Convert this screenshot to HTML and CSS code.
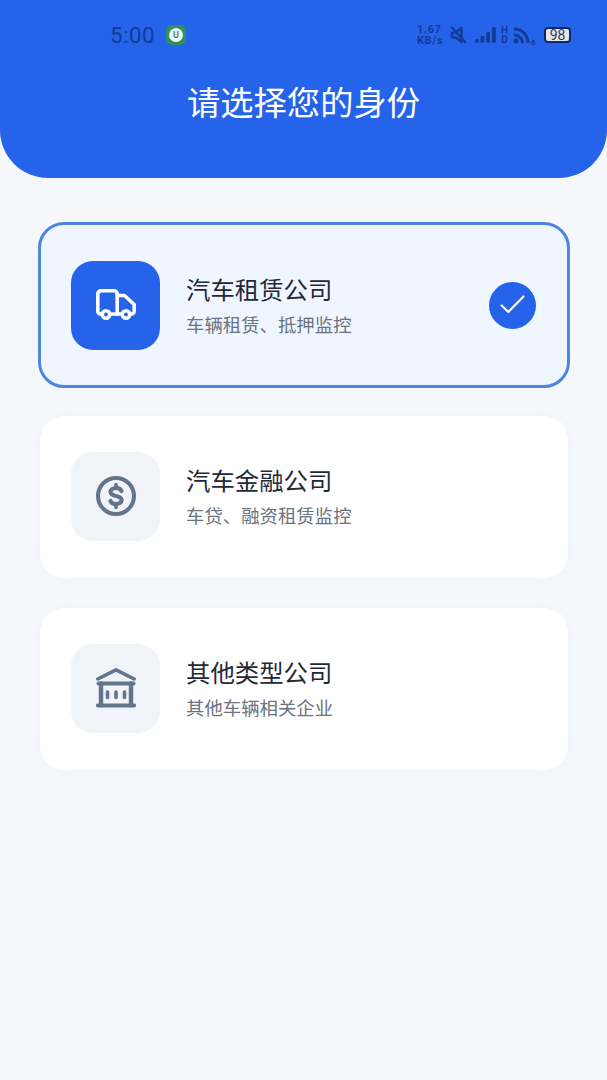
FILE: index.html
```html
<!DOCTYPE html>
<html lang="zh-CN">
<head>
<meta charset="utf-8">
<title>请选择您的身份</title>
<link rel="stylesheet" href="styles.css">
</head>
<body>
<header class="hero">
  <div class="status">
    <div class="status-left">
      <span class="clock">5:00</span>
      <span class="app-badge"><span class="app-dot">U</span></span>
    </div>
    <div class="status-right">
      <span class="speed"><span>1.67</span><span>KB/s</span></span>
      <svg class="st-mute" viewBox="0 0 18 18" width="18" height="18"><path d="M2 6.5h3.5L11.5 2v14l-6-4.500H2z" fill="none" stroke="#123b96" stroke-width="2.2" stroke-linejoin="round"/><path d="M1.5 1L16 17" stroke="#123b96" stroke-width="2.2"/></svg>
      <svg class="st-signal" viewBox="0 0 22 16" width="22" height="16"><g fill="#123b96"><rect x="0" y="12" width="3.8" height="3.8" rx="1.4"/><rect x="5.6" y="9" width="3.8" height="6.8" rx="1"/><rect x="11.2" y="5" width="3.8" height="10.8" rx="1"/><rect x="17" y="0" width="3.8" height="15.8" rx="1"/></g></svg>
      <span class="hd"><span>H</span><span>D</span></span>
      <svg class="st-wifi" viewBox="0 0 18 18" width="18" height="18"><g fill="none" stroke="#123b96" stroke-width="3"><path d="M1 3c8 0 14 6 14 14"/><path d="M1 9c5 0 8.5 3.500 8.5 8"/></g><circle cx="3" cy="15" r="2.500" fill="#123b96"/></svg>
      <span class="wifi-num">6</span>
      <span class="battery">98</span>
    </div>
  </div>
  <h1 class="title">请选择您的身份</h1>
</header>

<main class="list">
  <section class="card card-on">
    <div class="tile tile-on">
      <svg viewBox="0 0 40 32" width="40" height="32" fill="none" stroke="#fff" stroke-width="3.6" stroke-linejoin="round" stroke-linecap="round">
        <path d="M6 25H4.500A2.800 2.800 0 0 1 1.800 22.200V5A3.200 3.200 0 0 1 5 1.800H18A3.200 3.200 0 0 1 21.200 5V25"/>
        <path d="M21.200 6.500H28.500L38.200 15.500V22.200A2.800 2.800 0 0 1 35.500 25H34.500"/>
        <path d="M15 25H25"/>
        <circle cx="10" cy="25.500" r="3.700"/>
        <circle cx="30" cy="25.500" r="3.700"/>
      </svg>
    </div>
    <div class="copy">
      <h2 class="name">汽车租赁公司</h2>
      <p class="desc">车辆租赁、抵押监控</p>
    </div>
    <div class="check">
      <svg viewBox="0 0 26 22" width="26" height="22" fill="none" stroke="#fff" stroke-width="2.2" stroke-linecap="round" stroke-linejoin="round"><path d="M1.700 11.500L8.300 18L23.500 2.500"/></svg>
    </div>
  </section>

  <section class="card">
    <div class="tile">
      <svg viewBox="0 0 40 40" width="40" height="40" fill="none" stroke="#64748b" stroke-linecap="round">
        <circle cx="20" cy="20" r="18" stroke-width="4"/>
        <path d="M25.500 15C24.800 13 23 12 20 12C16.800 12 14.600 13.600 14.600 16C14.600 18.600 17 19.300 20 20C23 20.700 25.600 21.400 25.600 24C25.600 26.400 23.400 28 20 28C17 28 15.200 27 14.500 25" stroke-width="4.2"/>
        <path d="M20 8.500V11M20 29V31.500" stroke-width="3.6"/>
      </svg>
    </div>
    <div class="copy">
      <h2 class="name">汽车金融公司</h2>
      <p class="desc">车贷、融资租赁监控</p>
    </div>
  </section>

  <section class="card">
    <div class="tile">
      <svg viewBox="0 0 40 40" width="40" height="40" fill="none" stroke="#64748b" stroke-linecap="round" stroke-linejoin="round">
        <path d="M1.800 11L20 1.800L38.200 11" stroke-width="3.6"/>
        <path d="M2.500 15.500H37.500" stroke-width="4"/>
        <path d="M5 15.500V37M35 15.500V37" stroke-width="4.4"/>
        <path d="M1.800 37.500H38.200" stroke-width="3.8"/>
        <path d="M11.500 24V29.500M20 24V29.500M28.500 24V29.500" stroke-width="3.6"/>
      </svg>
    </div>
    <div class="copy">
      <h2 class="name">其他类型公司</h2>
      <p class="desc">其他车辆相关企业</p>
    </div>
  </section>
</main>
</body>
</html>
```
FILE: styles.css
```css
* { box-sizing: border-box; }
html, body { margin: 0; padding: 0; }
body {
  width: 607px;
  height: 1080px;
  overflow: hidden;
  background: #f5f7fb;
  font-family: "Noto Sans CJK SC", "Noto Sans", sans-serif;
}
.hero {
  height: 178px;
  background: #2563eb;
  border-radius: 0 0 48px 48px;
  padding-top: 20px;
}
.status {
  height: 30px;
  display: flex;
  align-items: center;
  justify-content: space-between;
  padding: 0 36px 0 110px;
  color: #123b96;
}
.status-left { display: flex; align-items: center; gap: 11px; }
.clock {
  font-family: Roboto, sans-serif;
  font-size: 22.5px;
  letter-spacing: 0.4px;
  color: #123b96;
}
.app-badge {
  width: 20px;
  height: 20px;
  border-radius: 5px;
  background: #2e8f5f;
  display: flex;
  align-items: center;
  justify-content: center;
}
.app-dot {
  width: 14px;
  height: 14px;
  border-radius: 50%;
  background: #eef7f0;
  color: #2f7a55;
  font: 500 9px/14px Roboto, sans-serif;
  text-align: center;
}
.status-right { display: flex; align-items: center; }
.speed {
  display: flex;
  flex-direction: column;
  width: 27px;
  font: 700 11px/11px Roboto, sans-serif;
  letter-spacing: 0.6px;
}
.st-mute { margin-left: 6px; }
.st-signal { margin-left: 7px; }
.hd {
  display: flex;
  flex-direction: column;
  width: 7px;
  margin-left: 4px;
  font: 700 10px/9px Roboto, sans-serif;
  text-align: center;
}
.st-wifi { margin-left: 5px; }
.wifi-num {
  width: 5px;
  align-self: flex-end;
  font: 700 8px/7px Roboto, sans-serif;
}
.battery {
  margin-left: 8px;
  width: 27px;
  height: 16px;
  border: 2px solid #0e2a6b;
  border-radius: 4px;
  background: #e5e7eb;
  color: #374151;
  font: 400 14px/12px Roboto, sans-serif;
  text-align: center;
}
.title {
  margin: 29px 0 0;
  text-align: center;
  color: #fff;
  font-size: 33.3px;
  line-height: 44px;
  font-weight: 400;
}
.list {
  display: flex;
  flex-direction: column;
  gap: 30px;
  padding: 46px 39px 0 40px;
}
.card {
  height: 162px;
  border-radius: 24px;
  background: #fff;
  box-shadow: 0 0 8px rgba(226, 232, 240, 0.35);
  display: flex;
  align-items: center;
  padding: 0 31px 2px;
}
.card-on {
  background: #eff6ff;
  outline: 3px solid #4d86de;
  outline-offset: -1px;
  box-shadow: none;
  padding-bottom: 0;
}
.tile {
  width: 89px;
  height: 89px;
  border-radius: 22px;
  background: #f0f4f9;
  display: flex;
  align-items: center;
  justify-content: center;
  flex: none;
}
.tile-on { background: #2563eb; }
.copy { margin-left: 26px; flex: 1; }
.name {
  margin: 0;
  font-size: 24.4px;
  line-height: 32px;
  font-weight: 400;
  color: #1f2937;
}
.desc {
  margin: 6px 0 0;
  font-size: 18.4px;
  line-height: 26px;
  color: #6b7280;
}
.card-on .copy { padding-bottom: 1px; }
.check {
  width: 47px;
  height: 47px;
  border-radius: 50%;
  background: #2563eb;
  display: flex;
  align-items: center;
  justify-content: center;
  margin-right: 1px;
}
```
